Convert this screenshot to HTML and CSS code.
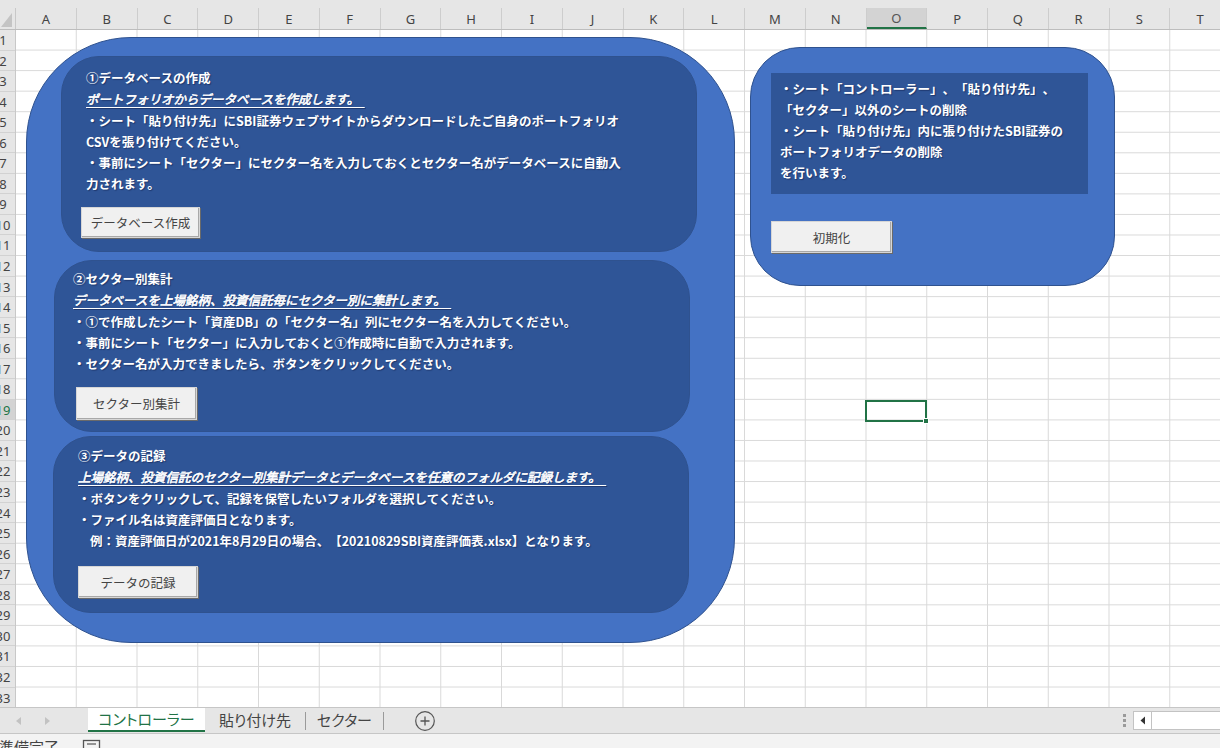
FILE: index.html
```html
<!DOCTYPE html>
<html lang="ja">
<head>
<meta charset="utf-8">
<title>コントローラー</title>
<link rel="stylesheet" href="styles.css">
</head>
<body>
<div class="sheet">
  <div class="colhead">
    <div class="corner">
      <svg class="corner-tri" width="14" height="16" viewBox="0 0 14 16"><polygon points="12,1 12,15 1,15" fill="#c4c4c4"/></svg>
    </div>
    <div class="col">A</div><div class="col">B</div><div class="col">C</div><div class="col">D</div><div class="col">E</div>
    <div class="col">F</div><div class="col">G</div><div class="col">H</div><div class="col">I</div><div class="col">J</div>
    <div class="col">K</div><div class="col">L</div><div class="col">M</div><div class="col">N</div><div class="col col-sel">O</div>
    <div class="col">P</div><div class="col">Q</div><div class="col">R</div><div class="col">S</div><div class="col">T</div>
  </div>
  <div class="grid">
    <div class="rowhead">
      <div class="rn"><span>1</span></div><div class="rn"><span>2</span></div><div class="rn"><span>3</span></div>
      <div class="rn"><span>4</span></div><div class="rn"><span>5</span></div><div class="rn"><span>6</span></div>
      <div class="rn"><span>7</span></div><div class="rn"><span>8</span></div><div class="rn"><span>9</span></div>
      <div class="rn"><span>10</span></div><div class="rn"><span>11</span></div><div class="rn"><span>12</span></div>
      <div class="rn"><span>13</span></div><div class="rn"><span>14</span></div><div class="rn"><span>15</span></div>
      <div class="rn"><span>16</span></div><div class="rn"><span>17</span></div><div class="rn"><span>18</span></div>
      <div class="rn rn-sel"><span>19</span></div><div class="rn"><span>20</span></div><div class="rn"><span>21</span></div>
      <div class="rn"><span>22</span></div><div class="rn"><span>23</span></div><div class="rn"><span>24</span></div>
      <div class="rn"><span>25</span></div><div class="rn"><span>26</span></div><div class="rn"><span>27</span></div>
      <div class="rn"><span>28</span></div><div class="rn"><span>29</span></div><div class="rn"><span>30</span></div>
      <div class="rn"><span>31</span></div><div class="rn"><span>32</span></div><div class="rn"><span>33</span></div>
    </div>
    <div class="cells">
      <div class="selcell"><div class="handle"></div></div>
    </div>
  </div>

  <div class="panel-main">
    <div class="box box1">
      <div class="txt txt1">
        <div class="ln">①データベースの作成</div>
        <div class="ln"><span class="ul">ポートフォリオからデータベースを作成します。&nbsp;&nbsp;</span></div>
        <div class="ln">・シート「貼り付け先」にSBI証券ウェブサイトからダウンロードしたご自身のポートフォリオ</div>
        <div class="ln">CSVを張り付けてください。</div>
        <div class="ln">・事前にシート「セクター」にセクター名を入力しておくとセクター名がデータベースに自動入</div>
        <div class="ln">力されます。</div>
      </div>
      <div class="btn btn1">データベース作成</div>
    </div>
    <div class="box box2">
      <div class="txt txt2">
        <div class="ln">②セクター別集計</div>
        <div class="ln"><span class="ul">データベースを上場銘柄、投資信託毎にセクター別に集計します。&nbsp;&nbsp;</span></div>
        <div class="ln">・①で作成したシート「資産DB」の「セクター名」列にセクター名を入力してください。</div>
        <div class="ln">・事前にシート「セクター」に入力しておくと①作成時に自動で入力されます。</div>
        <div class="ln">・セクター名が入力できましたら、ボタンをクリックしてください。</div>
      </div>
      <div class="btn btn2">セクター別集計</div>
    </div>
    <div class="box box3">
      <div class="txt txt3">
        <div class="ln">③データの記録</div>
        <div class="ln"><span class="ul">上場銘柄、投資信託のセクター別集計データとデータベースを任意のフォルダに記録します。&nbsp;&nbsp;</span></div>
        <div class="ln">・ボタンをクリックして、記録を保管したいフォルダを選択してください。</div>
        <div class="ln">・ファイル名は資産評価日となります。</div>
        <div class="ln ln-indent">例：資産評価日が2021年8月29日の場合、【20210829SBI資産評価表.xlsx】となります。</div>
      </div>
      <div class="btn btn3">データの記録</div>
    </div>
  </div>

  <div class="panel-side">
    <div class="side-text">
      <div class="ln">・シート「コントローラー」、「貼り付け先」、</div>
      <div class="ln">「セクター」以外のシートの削除</div>
      <div class="ln">・シート「貼り付け先」内に張り付けたSBI証券の</div>
      <div class="ln">ポートフォリオデータの削除</div>
      <div class="ln">を行います。</div>
    </div>
    <div class="btn btn4">初期化</div>
  </div>
</div>

<div class="tabbar">
  <div class="nav">
    <svg width="8" height="10" viewBox="0 0 8 10"><polygon points="6,1 6,9 1,5" fill="#c2c2c2"/></svg>
    <svg width="8" height="10" viewBox="0 0 8 10"><polygon points="2,1 2,9 7,5" fill="#c2c2c2"/></svg>
  </div>
  <div class="tab tab-active">コントローラー</div>
  <div class="tab tab2">貼り付け先</div>
  <div class="sep"></div>
  <div class="tab tab3">セクター</div>
  <div class="sep"></div>
  <div class="add">
    <svg width="22" height="22" viewBox="0 0 22 22"><circle cx="11" cy="11" r="9.3" fill="none" stroke="#555" stroke-width="1.2"/><path d="M11 6.5v9M6.5 11h9" stroke="#555" stroke-width="1.3"/></svg>
  </div>
  <div class="spacer"></div>
  <div class="dots"><i></i><i></i><i></i></div>
  <div class="hscroll">
    <div class="hs-btn"><svg width="6" height="9" viewBox="0 0 6 9"><polygon points="5,0.5 5,8.5 0.5,4.5" fill="#333"/></svg></div>
    <div class="hs-track"></div>
  </div>
</div>

<div class="status">
  <span class="ready">準備完了</span>
  <svg class="macro" width="20" height="16" viewBox="0 0 20 16"><rect x="1.5" y="1.5" width="16" height="13" fill="none" stroke="#555" stroke-width="1.3"/><path d="M5 5h9" stroke="#555" stroke-width="1.2"/></svg>
</div>
</body>
</html>
```
FILE: styles.css
```css
* { box-sizing: border-box; }
html, body { margin: 0; padding: 0; }
body {
  width: 1220px;
  height: 748px;
  overflow: hidden;
  background: #ffffff;
  font-family: "Noto Sans CJK JP", "Noto Sans", sans-serif;
}

/* ---------- sheet grid ---------- */
.sheet {
  position: relative;
  height: 707px;
  overflow: hidden;
}
.colhead {
  display: flex;
  height: 30px;
  padding-top: 8px;
  background: #e6e6e6;
  border-bottom: 1px solid #bdbdbd;
}
.corner {
  flex: 0 0 16px;
  border-right: 1px solid #c8c8c8;
  position: relative;
}
.corner-tri { display: block; margin-top: 4px; }
.col {
  flex: 0 0 60.75px;
  border-right: 1px solid #cdcdcd;
  display: flex;
  align-items: center;
  justify-content: center;
  font-family: "Noto Sans", "Liberation Sans", sans-serif;
  font-size: 13px;
  color: #444;
}
.col-sel {
  background: #d3d3d3;
  border-bottom: 2px solid #217346;
  color: #555;
}
.grid {
  display: flex;
  height: 677px;
}
.rowhead {
  flex: 0 0 16px;
  background: #e6e6e6;
  border-right: 1px solid #c8c8c8;
  overflow: hidden;
}
.rn {
  height: 20.56px;
  border-bottom: 1px solid #d2d2d2;
  font-family: "Noto Sans", "Liberation Sans", sans-serif;
  font-size: 13px;
  line-height: 20px;
  color: #444;
}
.rn span {
  display: block;
  width: 26px;
  margin-left: -10px;
  text-align: center;
}
.rn-sel {
  background: #d3d3d3;
  color: #217346;
}
.cells {
  flex: 1;
  position: relative;
  background-image:
    linear-gradient(to right, transparent 59.75px, #d9d9d9 59.75px),
    linear-gradient(to bottom, transparent 19.56px, #d9d9d9 19.56px);
  background-size: 60.75px 20.56px;
}
.selcell {
  position: absolute;
  left: 849px;
  top: 370px;
  width: 62px;
  height: 22px;
  border: 2px solid #217346;
}
.handle {
  position: absolute;
  right: -4px;
  bottom: -4px;
  width: 6px;
  height: 6px;
  background: #217346;
  border: 1px solid #fff;
}

/* ---------- shapes ---------- */
.panel-main {
  position: absolute;
  left: 26px;
  top: 37px;
  width: 709px;
  height: 606px;
  background: #4472c4;
  border: 1px solid #2f528f;
  border-radius: 105px;
  padding-top: 18px;
  display: flex;
  flex-direction: column;
}
.box {
  width: 636px;
  background: #2f5597;
  border: 1px solid #2f528f;
  border-radius: 38px;
  display: flex;
  flex-direction: column;
  align-items: flex-start;
}
.box1 { margin-left: 34px; height: 196px; }
.box2 { margin-left: 27px; margin-top: 8px; height: 172px; }
.box3 { margin-left: 26px; margin-top: 4px; height: 177px; }

.txt, .side-text {
  color: #ffffff;
  font-weight: 700;
  font-size: 12.5px;
  text-spacing-trim: space-all;
  text-shadow: 1px 1px 1px rgba(10, 20, 60, 0.45);
}
.ln {
  line-height: 21.3px;
  height: 21.3px;
  white-space: nowrap;
}
.ul {
  font-style: italic;
  font-weight: 400;
  -webkit-text-stroke: 0.35px #ffffff;
  text-decoration: underline;
  text-decoration-thickness: 1px;
  text-underline-offset: 3px;
  white-space: pre;
}
.ln-indent { padding-left: 12px; }

.txt1 { padding: 10px 0 0 24px; }
.txt2 { padding: 7px 0 0 18px; }
.txt3 { padding: 8px 0 0 24px; }

.btn {
  display: flex;
  align-items: center;
  justify-content: center;
  width: 120px;
  height: 32px;
  background: #f0f0f0;
  border: 1px solid #d6d6d6;
  box-shadow: 1px 1px 0 #6a6a6a, inset -1px -1px 0 #a8a8a8;
  color: #444;
  font-size: 12.5px;
  font-weight: 400;
}
.btn1 { margin: 12px 0 0 19px; width: 119px; height: 31px; }
.btn2 { margin: 13px 0 0 21px; width: 121px; height: 33px; }
.btn3 { margin: 15px 0 0 24px; }

.panel-side {
  position: absolute;
  left: 750px;
  top: 47px;
  width: 365px;
  height: 239px;
  background: #4472c4;
  border: 1px solid #2f528f;
  border-radius: 50px;
  display: flex;
  flex-direction: column;
  align-items: flex-start;
}
.side-text {
  margin: 25px 0 0 20px;
  width: 317px;
  height: 121px;
  background: #2f5597;
  padding: 5px 0 0 9px;
}
.side-text .ln { line-height: 21px; height: 21px; }
.btn4 { margin: 27px 0 0 20px; width: 121px; }

/* ---------- tab bar ---------- */
.tabbar {
  display: flex;
  align-items: stretch;
  height: 27px;
  background: #e6e6e6;
  border-top: 1px solid #c6c6c6;
  border-bottom: 1px solid #c6c6c6;
}
.nav {
  flex: 0 0 88px;
  display: flex;
  align-items: center;
  gap: 20px;
  padding-left: 15px;
}
.nav svg { display: block; }
.tab {
  display: flex;
  align-items: center;
  justify-content: center;
  font-size: 15px;
  font-feature-settings: "palt";
  color: #444;
  padding-bottom: 2px;
}
.tab-active {
  width: 117px;
  background: #ffffff;
  color: #217346;
  border-bottom: 2px solid #217346;
  margin-bottom: 1px;
}
.tab2 { width: 100px; }
.tab3 { width: 77px; }
.sep {
  width: 1px;
  margin: 4px 0 3px;
  background: #9a9a9a;
}
.add {
  width: 82px;
  display: flex;
  align-items: center;
  justify-content: center;
}
.add svg { display: block; }
.spacer { flex: 1; }
.dots {
  width: 17px;
  display: flex;
  flex-direction: column;
  justify-content: center;
  align-items: center;
  gap: 2px;
}
.dots i {
  display: block;
  width: 3px;
  height: 3px;
  background: #9a9a9a;
}
.hscroll {
  margin: 3px -13px 3px 0;
  flex: 0 0 100px;
  display: flex;
  border: 1px solid #c3c3c3;
  background: #ffffff;
}
.hs-btn {
  width: 18px;
  border-right: 1px solid #c3c3c3;
  display: flex;
  align-items: center;
  justify-content: center;
}
.hs-track { flex: 1; }

/* ---------- status bar ---------- */
.status {
  height: 14px;
  background: #f3f3f3;
  display: flex;
  align-items: flex-start;
  overflow: hidden;
}
.ready {
  font-size: 15px;
  line-height: 20px;
  color: #444;
  margin-top: 3px;
  margin-left: -1px;
  white-space: nowrap;
}
.macro { margin: 5px 0 0 23px; flex: 0 0 auto; }
```
